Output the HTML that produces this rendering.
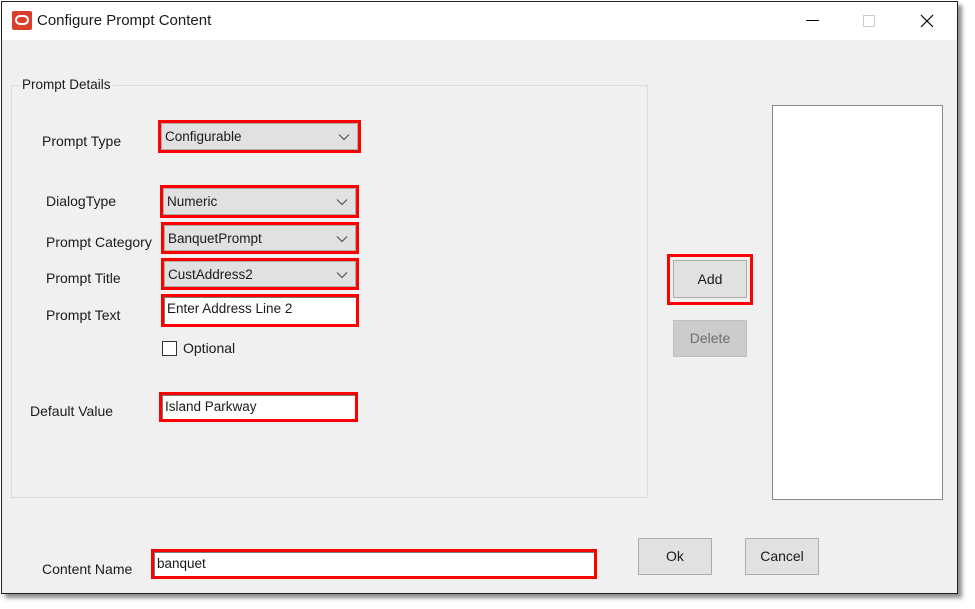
<!DOCTYPE html>
<html><head><meta charset="utf-8"><style>
*{margin:0;padding:0;box-sizing:border-box}
body{width:975px;height:609px;background:#fff;position:relative;overflow:hidden;font-family:"Liberation Sans",sans-serif;font-size:13.5px;color:#1a1a1a}
.a{position:absolute}
.win{left:1px;top:1px;width:957px;height:593px;border:1px solid #222;background:#f0f0f0;box-shadow:4px 4px 4px rgba(0,0,0,.45)}
.title{left:2px;top:2px;width:955px;height:38px;background:#fff}
.red{position:absolute;border:3px solid #f00}
.combo{position:absolute;left:0;top:0;right:0;bottom:0;background:#e1e1e1;border:1px solid #adadad;padding:5px 3px;font-size:13.5px}
.edit{position:absolute;left:0;top:0;right:0;bottom:0;background:#fff;border:1px solid #7a7a7a;border-width:1px 0 0 1px;padding:3px 2px;font-size:13.5px}
.chev{position:absolute;right:7px;top:9px;width:12px;height:8px}
.btn{position:absolute;background:#e1e1e1;border:1px solid #adadad;text-align:center;font-size:14px}
.lbl{position:absolute;font-size:14px}
</style></head><body>
<div class="a win"></div>
<div class="a title"></div>
<div class="a" style="left:12px;top:11px;width:20px;height:19px;background:#d9402b;border-radius:2px"></div>
<div class="a" style="left:15px;top:15px;width:14px;height:10px;border:2px solid #fff;border-radius:5px"></div>
<div class="a" style="left:37px;top:12px;font-size:15px">Configure Prompt Content</div>
<div class="a" style="left:806px;top:20px;width:13px;height:1px;background:#000"></div>
<div class="a" style="left:863px;top:15px;width:12px;height:12px;border:1px solid #ccc"></div>
<svg class="a" style="left:920px;top:14px" width="14" height="14"><path d="M1 1L13 13M13 1L1 13" stroke="#000" stroke-width="1.2"/></svg>

<div class="a" style="left:11px;top:85px;width:637px;height:413px;border:1px solid #dcdcdc"></div>
<div class="a" style="left:20px;top:77px;background:#f0f0f0;padding:0 2px;font-size:13.5px">Prompt Details</div>

<div class="lbl" style="left:42px;top:133px">Prompt Type</div>
<div class="lbl" style="left:46px;top:193px">DialogType</div>
<div class="lbl" style="left:46px;top:234px">Prompt Category</div>
<div class="lbl" style="left:46px;top:270px">Prompt Title</div>
<div class="lbl" style="left:46px;top:307px">Prompt Text</div>
<div class="lbl" style="left:30px;top:403px">Default Value</div>
<div class="lbl" style="left:42px;top:561px">Content Name</div>

<div class="red" style="left:158px;top:120px;width:203px;height:33px"><div class="combo">Configurable<svg class="chev" viewBox="0 0 12 8"><path d="M1 1.5L6 6.5L11 1.5" fill="none" stroke="#555" stroke-width="1.2"/></svg></div></div>
<div class="red" style="left:160px;top:185px;width:199px;height:33px"><div class="combo">Numeric<svg class="chev" viewBox="0 0 12 8"><path d="M1 1.5L6 6.5L11 1.5" fill="none" stroke="#555" stroke-width="1.2"/></svg></div></div>
<div class="red" style="left:161px;top:222px;width:198px;height:32px"><div class="combo">BanquetPrompt<svg class="chev" viewBox="0 0 12 8"><path d="M1 1.5L6 6.5L11 1.5" fill="none" stroke="#555" stroke-width="1.2"/></svg></div></div>
<div class="red" style="left:161px;top:258px;width:198px;height:32px"><div class="combo">CustAddress2<svg class="chev" viewBox="0 0 12 8"><path d="M1 1.5L6 6.5L11 1.5" fill="none" stroke="#555" stroke-width="1.2"/></svg></div></div>
<div class="red" style="left:161px;top:294px;width:198px;height:33px"><div class="edit">Enter Address Line 2</div></div>
<div class="a" style="left:162px;top:341px;width:15px;height:15px;background:#fff;border:1px solid #333"></div>
<div class="lbl" style="left:183px;top:340px">Optional</div>
<div class="red" style="left:159px;top:392px;width:199px;height:30px"><div class="edit">Island Parkway</div></div>
<div class="red" style="left:151px;top:549px;width:446px;height:30px"><div class="edit">banquet</div></div>

<div class="red" style="left:667px;top:254px;width:86px;height:51px"></div>
<div class="btn" style="left:673px;top:260px;width:74px;height:38px;line-height:36px">Add</div>
<div class="btn" style="left:673px;top:320px;width:74px;height:37px;line-height:35px;background:#cccccc;border-color:#bfbfbf;color:#6d6d6d">Delete</div>
<div class="a" style="left:772px;top:105px;width:171px;height:395px;background:#fff;border:1px solid #828790"></div>
<div class="btn" style="left:638px;top:538px;width:74px;height:37px;line-height:35px">Ok</div>
<div class="btn" style="left:745px;top:538px;width:74px;height:37px;line-height:35px">Cancel</div>
</body></html>
